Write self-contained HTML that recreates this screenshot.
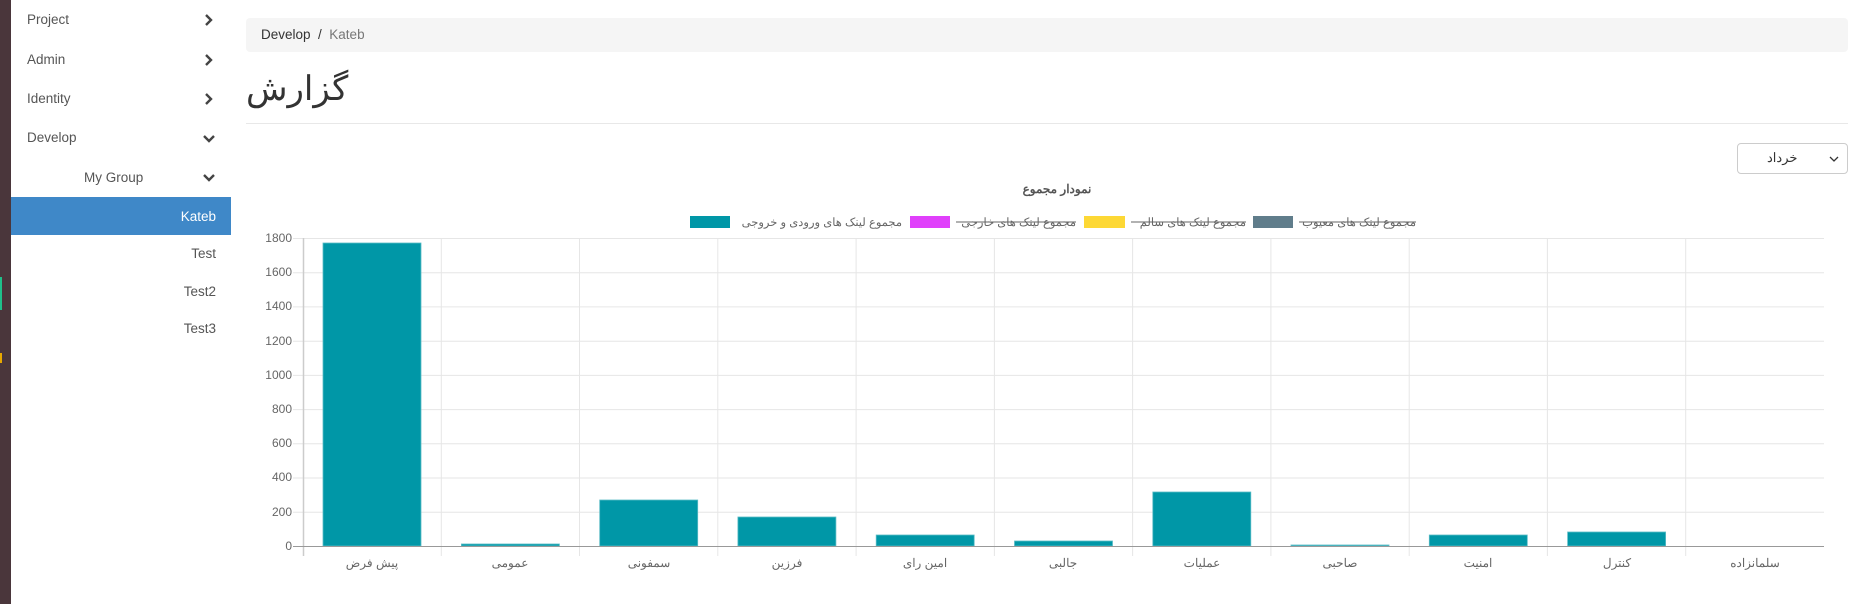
<!DOCTYPE html>
<html><head><meta charset="utf-8"><style>
*{margin:0;padding:0;box-sizing:border-box}
body{width:1858px;height:604px;overflow:hidden;background:#fff;font-family:"Liberation Sans","Noto Sans CJK SC",sans-serif;position:relative}
.strip{position:absolute;left:0;top:0;width:11px;height:604px;background:#4a363b}
.side{position:absolute;left:11px;top:0;width:220px;height:604px;background:#fff}
.it{position:absolute;font-size:13.5px;color:#555}
.chev{position:absolute;left:202px;width:14px;height:14px}
.act{position:absolute;left:11px;top:197px;width:220px;height:38px;background:#3f88c8}
.bc{position:absolute;left:246px;top:18px;width:1602px;height:34px;background:#f5f5f5;border-radius:4px;font-size:13.5px;line-height:34px;padding-left:15px;color:#333}
.bc span{color:#777}
h1{position:absolute;left:246px;top:67px;font-weight:400;font-size:34px;color:#333;font-family:"Liberation Sans","Noto Sans CJK SC",sans-serif;line-height:44px}
.hr{position:absolute;left:246px;top:123px;width:1602px;height:1px;background:#e8e8e8}
.sel{position:absolute;left:1737px;top:143px;width:111px;height:31px;border:1px solid #ccc;border-radius:4px;font-size:13px;color:#333}
</style></head><body>
<div class="strip"></div>
<div style="position:absolute;left:0;top:277px;width:2px;height:33px;background:#1fc08a"></div>
<div style="position:absolute;left:0;top:353px;width:2px;height:10px;background:#e8a800"></div>
<div class="side"></div>
<div class="act"></div>
<div class="it" style="left:27px;top:12px">Project</div>
<div class="it" style="left:27px;top:52px">Admin</div>
<div class="it" style="left:27px;top:91px">Identity</div>
<div class="it" style="left:27px;top:130px">Develop</div>
<div class="it" style="left:84px;top:170px">My Group</div>
<div class="it" style="right:1642px;top:209px;color:#fff">Kateb</div>
<div class="it" style="right:1642px;top:246px">Test</div>
<div class="it" style="right:1642px;top:284px">Test2</div>
<div class="it" style="right:1642px;top:321px">Test3</div>
<svg class="chev" style="top:13px" viewBox="0 0 14 14"><path d="M4 2l5 5-5 5" fill="none" stroke="#444" stroke-width="2.4"/></svg>
<svg class="chev" style="top:53px" viewBox="0 0 14 14"><path d="M4 2l5 5-5 5" fill="none" stroke="#444" stroke-width="2.4"/></svg>
<svg class="chev" style="top:92px" viewBox="0 0 14 14"><path d="M4 2l5 5-5 5" fill="none" stroke="#444" stroke-width="2.4"/></svg>
<svg class="chev" style="top:132px" viewBox="0 0 14 14"><path d="M2 4l5 5 5-5" fill="none" stroke="#444" stroke-width="2.4"/></svg>
<svg class="chev" style="top:171px" viewBox="0 0 14 14"><path d="M2 4l5 5 5-5" fill="none" stroke="#444" stroke-width="2.4"/></svg>

<div class="bc">Develop &nbsp;/&nbsp; <span>Kateb</span></div>
<h1>گزارش</h1>
<div class="hr"></div>
<div class="sel"><span style="position:absolute;left:29px;top:6px">خرداد</span>
<svg style="position:absolute;right:8px;top:11px" width="10" height="8" viewBox="0 0 10 8"><path d="M1 2l4 4 4-4" fill="none" stroke="#333" stroke-width="1.3"/></svg></div>

<svg style="position:absolute;left:0;top:0" width="1858" height="604" font-family="Liberation Sans, Noto Sans CJK SC, sans-serif">
<text x="1057" y="193" text-anchor="middle" font-size="12" font-weight="bold" fill="#555">نمودار مجموع</text>
<g font-size="11.5" fill="#666">
<rect x="690" y="216" width="40" height="12" fill="#0097a7"/>
<text x="902" y="226" text-anchor="end">مجموع لینک های ورودی و خروجی</text>
<rect x="910" y="216" width="40" height="12" fill="#e040fb"/>
<text x="1076" y="226" text-anchor="end">مجموع لینک های خارجی</text>
<line x1="956" y1="222" x2="1076" y2="222" stroke="#666"/>
<rect x="1084" y="216" width="41" height="12" fill="#fdd835"/>
<text x="1246" y="226" text-anchor="end">مجموع لینک های سالم</text>
<line x1="1131" y1="222" x2="1246" y2="222" stroke="#666"/>
<rect x="1253" y="216" width="40" height="12" fill="#607d8b"/>
<text x="1416" y="226" text-anchor="end">مجموع لینک های معیوب</text>
<line x1="1299" y1="222" x2="1416" y2="222" stroke="#666"/>
</g>
<g stroke="#e6e6e6" stroke-width="1">
<line x1="293" y1="238.5" x2="1824" y2="238.5"/>
<line x1="293" y1="272.7" x2="1824" y2="272.7"/>
<line x1="293" y1="306.9" x2="1824" y2="306.9"/>
<line x1="293" y1="341.2" x2="1824" y2="341.2"/>
<line x1="293" y1="375.4" x2="1824" y2="375.4"/>
<line x1="293" y1="409.6" x2="1824" y2="409.6"/>
<line x1="293" y1="443.8" x2="1824" y2="443.8"/>
<line x1="293" y1="478" x2="1824" y2="478"/>
<line x1="293" y1="512.2" x2="1824" y2="512.2"/>
<line x1="441.3" y1="238" x2="441.3" y2="556"/>
<line x1="579.5" y1="238" x2="579.5" y2="556"/>
<line x1="717.8" y1="238" x2="717.8" y2="556"/>
<line x1="856.1" y1="238" x2="856.1" y2="556"/>
<line x1="994.4" y1="238" x2="994.4" y2="556"/>
<line x1="1132.6" y1="238" x2="1132.6" y2="556"/>
<line x1="1270.9" y1="238" x2="1270.9" y2="556"/>
<line x1="1409.2" y1="238" x2="1409.2" y2="556"/>
<line x1="1547.4" y1="238" x2="1547.4" y2="556"/>
<line x1="1685.7" y1="238" x2="1685.7" y2="556"/>
</g>
<line x1="303.5" y1="238" x2="303.5" y2="556" stroke="#ccc" stroke-width="1.5"/>
<g fill="#0097a7" stroke="#5bbcc6" stroke-width="0.8">
<rect x="323" y="243" width="98" height="303"/>
<rect x="461.4" y="544" width="98" height="2"/>
<rect x="599.7" y="500" width="98" height="46"/>
<rect x="737.9" y="517" width="98" height="29"/>
<rect x="876.2" y="535" width="98" height="11"/>
<rect x="1014.5" y="541" width="98" height="5"/>
<rect x="1152.8" y="492" width="98" height="54"/>
<rect x="1291" y="545" width="98" height="1"/>
<rect x="1429.3" y="535" width="98" height="11"/>
<rect x="1567.6" y="532" width="98" height="14"/>
</g>
<line x1="293" y1="546.5" x2="1824" y2="546.5" stroke="#999" stroke-width="1"/>
<g font-size="12" fill="#666" text-anchor="end">
<text x="292" y="242">1800</text><text x="292" y="276">1600</text><text x="292" y="310">1400</text>
<text x="292" y="345">1200</text><text x="292" y="379">1000</text><text x="292" y="413">800</text>
<text x="292" y="447">600</text><text x="292" y="481">400</text><text x="292" y="516">200</text>
<text x="292" y="550">0</text>
</g>
<g font-size="12" fill="#666" text-anchor="middle">
<text x="372" y="567">پیش فرض</text><text x="510" y="567">عمومی</text><text x="649" y="567">سمفونی</text>
<text x="787" y="567">فرزین</text><text x="925" y="567">امین رای</text><text x="1063" y="567">جالبی</text>
<text x="1202" y="567">عملیات</text><text x="1340" y="567">صاحبی</text><text x="1478" y="567">امنیت</text>
<text x="1617" y="567">کنترل</text><text x="1755" y="567">سلمانزاده</text>
</g>
</svg>
</body></html>
